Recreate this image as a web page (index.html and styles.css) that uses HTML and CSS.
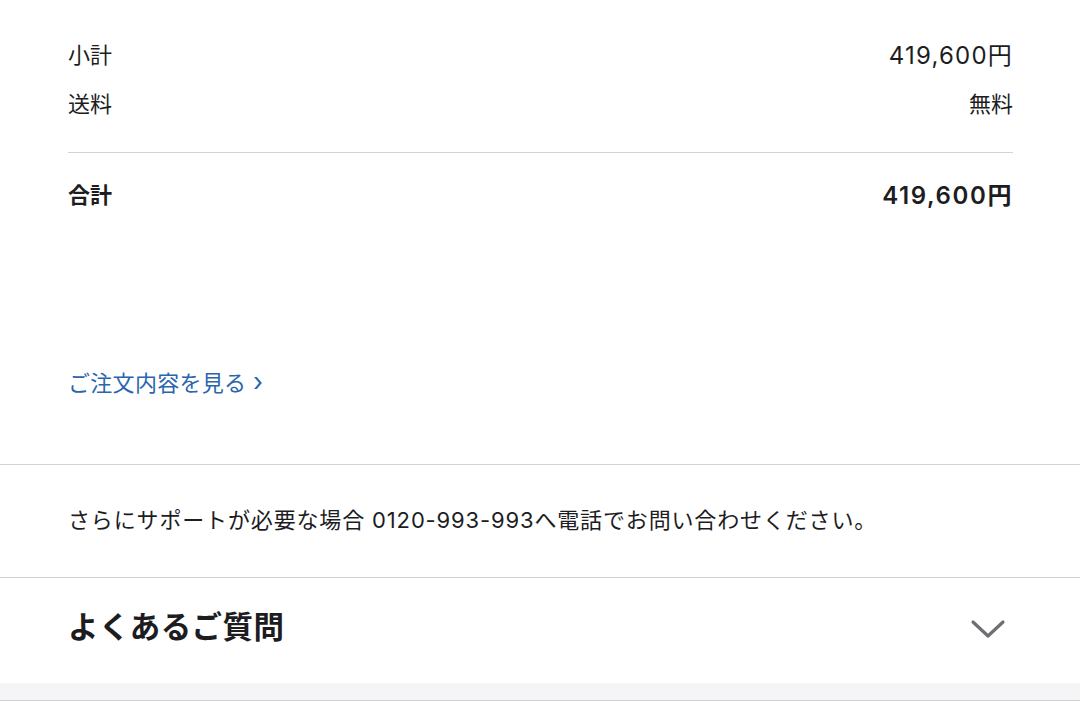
FILE: index.html
```html
<!DOCTYPE html>
<html lang="ja">
<head>
<meta charset="utf-8">
<link rel="stylesheet" href="styles.css">
</head>
<body>
<section class="summary">
  <div class="row row-sub"><span>小計</span><span class="num">419,600円</span></div>
  <div class="row row-ship"><span>送料</span><span>無料</span></div>
  <div class="row row-total"><span>合計</span><span class="num">419,600円</span></div>
  <a class="link" href="#">ご注文内容を見る <span class="chev">›</span></a>
</section>
<section class="support">
  <p>さらにサポートが必要な場合 0120-993-993へ電話でお問い合わせください。</p>
</section>
<section class="faq">
  <h2>よくあるご質問</h2>
  <svg class="faq-chev" width="36" height="22" viewBox="0 0 36 22"><path d="M3 4 L18 18 L33 4" fill="none" stroke="#6e6e73" stroke-width="3.2" stroke-linecap="round" stroke-linejoin="round"/></svg>
</section>
<div class="band"></div>
</body>
</html>
```
FILE: styles.css
```css
html, body { margin: 0; padding: 0; background: #fff; }
body {
  font-family: "Inter", "Noto Sans CJK JP", "Noto Sans", sans-serif;
  color: #1d1d1f;
  width: 1080px;
  height: 701px;
  overflow: hidden;
}
.summary { padding: 37px 67px 0 68px; height: 465px; box-sizing: border-box; border-bottom: 1px solid #d2d2d7; }
.row { display: flex; justify-content: space-between; align-items: center; font-size: 22px; }
.num { font-size: 24px; letter-spacing: 1.2px; }
.row-sub { height: 32px; }
.row-ship { height: 32px; margin-top: 17px; padding-bottom: 34px; border-bottom: 1px solid #d2d2d7; }
.row-total { height: 32px; margin-top: 24px; font-weight: 700; }
.row-total .num { font-weight: 600; letter-spacing: 1.6px; }
.link {
  display: inline-block;
  margin-top: 157px;
  color: #2a65ad;
  text-decoration: none;
  font-size: 22px;
  line-height: 32px;
  letter-spacing: 0.3px;
}
.chev { font-size: 26px; }
.support { height: 113px; box-sizing: border-box; border-bottom: 1px solid #d2d2d7; padding: 0 68px 7px; display: flex; align-items: center; }
.support p { margin: 0; font-size: 22px; letter-spacing: 0.85px; white-space: nowrap; }
.faq { height: 105px; display: flex; align-items: center; justify-content: space-between; padding: 0 74px 0 68px; }
.faq h2 { margin: 0; padding-bottom: 12px; font-size: 30.5px; font-weight: 700; letter-spacing: 0.4px; }
.faq-chev { display: block; margin-bottom: 4px; }
.band { height: 17px; background: #f5f5f7; border-bottom: 1px solid #d2d2d7; }
```
